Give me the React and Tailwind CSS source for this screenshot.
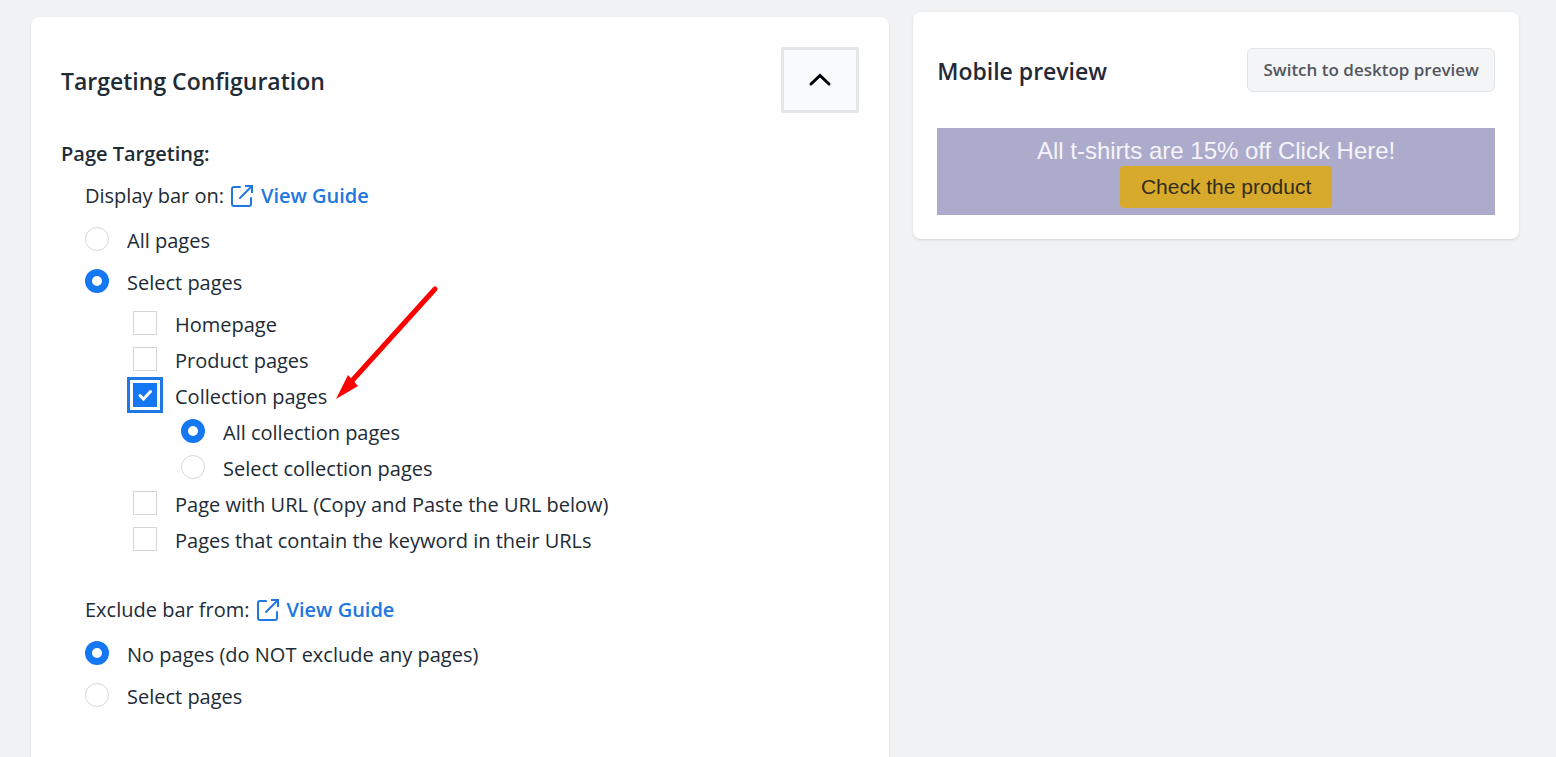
import { useState } from 'react';

const radioClass =
  'appearance-none w-6 h-6 shrink-0 rounded-full bg-white border border-[#d4d6d9] checked:border-[7px] checked:border-[#1677f2]';

function ExternalIcon() {
  return (
    <svg width="22" height="22" viewBox="0 0 22 22" fill="none" stroke="currentColor" strokeWidth="2" strokeLinecap="round" aria-hidden="true">
      <path d="M9 2H3a2 2 0 0 0-2 2v15a2 2 0 0 0 2 2h15a2 2 0 0 0 2-2v-6" />
      <path d="M9 13 20.500 1.500" />
      <path d="M15 1h6v6" strokeLinecap="square" />
    </svg>
  );
}

function GuideRow({ label, className }) {
  return (
    <div className={className}>
      <span>{label}</span>
      <a href="#guide" className="flex items-center gap-2 font-semibold text-[#2176e0]">
        <ExternalIcon />
        View Guide
      </a>
    </div>
  );
}

function Radio({ name, label, checked, onChange }) {
  return (
    <label className="flex h-9 w-fit items-start gap-[18px] pt-1">
      <input type="radio" name={name} checked={checked} onChange={onChange} className={radioClass} />
      <span>{label}</span>
    </label>
  );
}

function Checkbox({ label, checked, onChange, children }) {
  return (
    <label className="relative flex h-9 w-fit items-start gap-[18px] pt-1">
      <span className="relative flex shrink-0">
        <input
          type="checkbox"
          checked={checked}
          onChange={onChange}
          className="peer appearance-none w-6 h-6 bg-white border border-[#d4d6d9] checked:border-0 checked:bg-[#1677f2] checked:outline-3 checked:outline-offset-3 checked:outline-[#1f78e4]"
        />
        <svg
          className="absolute inset-0 hidden peer-checked:block pointer-events-none"
          width="24"
          height="24"
          viewBox="0 0 24 24"
          fill="none"
          stroke="white"
          strokeWidth="3"
          aria-hidden="true"
        >
          <path d="m7 12.500 3.500 3.500L17.500 8.500" strokeLinecap="round" />
        </svg>
      </span>
      <span>{label}</span>
      {children}
    </label>
  );
}

function Arrow() {
  return (
    <svg
      className="absolute left-full bottom-[14px] ml-2 pointer-events-none"
      width="106"
      height="116"
      viewBox="0 0 106 116"
      fill="#fe0000"
      aria-hidden="true"
    >
      <path d="M100 4 15 98" stroke="#fe0000" strokeWidth="5" strokeLinecap="round" />
      <path d="M1 114 13 90 23 101Z" />
    </svg>
  );
}

export default function App() {
  const [open, setOpen] = useState(true);
  const [display, setDisplay] = useState('select');
  const [collection, setCollection] = useState('all');
  const [exclude, setExclude] = useState('none');
  const [mobile, setMobile] = useState(true);
  const [pages, setPages] = useState({ collection: true });

  const toggle = (key) => setPages({ ...pages, [key]: !pages[key] });

  return (
    <main className="grid h-screen grid-cols-[17fr_12fr] items-start gap-6 overflow-hidden bg-[#f1f2f4] pl-[31px] pr-[37px] pt-3 font-['Open_Sans',sans-serif] text-xl text-[#212b36]">
      <section className="mt-[5px] rounded-lg bg-white px-[30px] pt-[30px] pb-20 shadow">
        <div className="flex items-center justify-between">
          <h2 className="pt-0.5 text-[23px] font-semibold">Targeting Configuration</h2>
          <button
            type="button"
            aria-label="Toggle section"
            aria-expanded={open}
            onClick={() => setOpen(!open)}
            className="flex h-[66px] w-[78px] items-center justify-center rounded-xs border-3 border-[#e4e6e8] bg-[#f9fafc] text-black"
          >
            <svg width="24" height="24" viewBox="0 0 24 24" fill="none" stroke="currentColor" strokeWidth="3" strokeLinecap="round" aria-hidden="true">
              <path d="M3 16 12 7.500 21 16" />
            </svg>
          </button>
        </div>

        {open && (
          <div className="mt-[23px]">
            <h3 className="flex h-9 items-center font-semibold">Page Targeting:</h3>
            <div className="mt-1.5 pl-6">
              <GuideRow label="Display bar on:" className="mb-[9px] flex h-9 items-center gap-[7px]" />
              <div className="space-y-1.5">
                <Radio name="display" label="All pages" checked={display === 'all'} onChange={() => setDisplay('all')} />
                <Radio name="display" label="Select pages" checked={display === 'select'} onChange={() => setDisplay('select')} />
                {display === 'select' && (
                  <div className="pl-12">
                    <Checkbox label="Homepage" checked={!!pages.home} onChange={() => toggle('home')} />
                    <Checkbox label="Product pages" checked={!!pages.product} onChange={() => toggle('product')} />
                    <Checkbox label="Collection pages" checked={!!pages.collection} onChange={() => toggle('collection')}>
                      <Arrow />
                    </Checkbox>
                    {pages.collection && (
                      <div className="pl-12">
                        <Radio name="collection" label="All collection pages" checked={collection === 'all'} onChange={() => setCollection('all')} />
                        <Radio name="collection" label="Select collection pages" checked={collection === 'select'} onChange={() => setCollection('select')} />
                      </div>
                    )}
                    <Checkbox label="Page with URL (Copy and Paste the URL below)" checked={!!pages.url} onChange={() => toggle('url')} />
                    <Checkbox label="Pages that contain the keyword in their URLs" checked={!!pages.keyword} onChange={() => toggle('keyword')} />
                  </div>
                )}
              </div>

              <GuideRow label="Exclude bar from:" className="mt-[33px] mb-[9px] flex h-9 items-center gap-[7px]" />
              <div className="space-y-1.5">
                <Radio name="exclude" label="No pages (do NOT exclude any pages)" checked={exclude === 'none'} onChange={() => setExclude('none')} />
                <Radio name="exclude" label="Select pages" checked={exclude === 'select'} onChange={() => setExclude('select')} />
              </div>
            </div>
          </div>
        )}
      </section>

      <section className="rounded-lg bg-white px-6 pt-9 pb-6 shadow">
        <div className="mb-9 flex items-center justify-between">
          <h2 className="pt-0.5 text-[23px] font-semibold text-[#232937]">{mobile ? 'Mobile' : 'Desktop'} preview</h2>
          <button
            type="button"
            onClick={() => setMobile(!mobile)}
            className="h-11 rounded-md border border-[#e2e5e8] bg-[#f3f5f7] px-[15px] text-[17px] font-semibold text-[#53575f]"
          >
            Switch to {mobile ? 'desktop' : 'mobile'} preview
          </button>
        </div>
        <div className="flex flex-col items-center bg-[#adabcc] pt-2 pb-[7px] font-['Liberation_Sans',sans-serif]">
          <p className="text-2xl leading-[30px] text-[#f5f4fa]">All t-shirts are 15% off Click Here!</p>
          <button type="button" className="ml-5 h-[42px] rounded-sm bg-[#d8aa2b] px-[21px] text-[21px] text-[#322d1d]">
            Check the product
          </button>
        </div>
      </section>
    </main>
  );
}
